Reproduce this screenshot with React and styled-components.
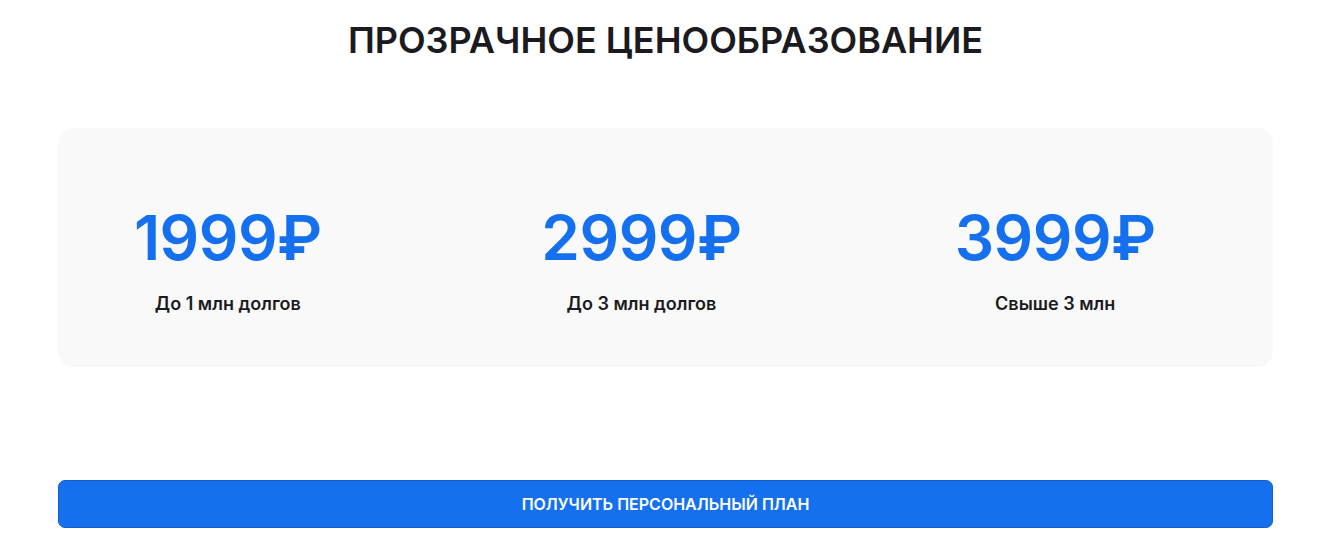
import React from 'react';
import styled, { createGlobalStyle } from 'styled-components';

const GlobalStyle = createGlobalStyle`
  body {
    margin: 0;
    background: #ffffff;
    font-family: Inter, "Noto Sans", sans-serif;
  }
`;

const Section = styled.section`
  width: 1215px;
  margin-left: 58px;
  padding-top: 19px;
  display: flex;
  flex-direction: column;
`;

const Title = styled.h2`
  margin: 0;
  text-align: center;
  font-size: 36px;
  line-height: 42px;
  font-weight: 600;
  color: #1b1b1f;
`;

const Card = styled.div`
  margin-top: 67px;
  height: 239px;
  background: #f9f9f9;
  border-radius: 16px;
  display: grid;
  grid-template-columns: repeat(3, 1fr);
  column-gap: 80px;
  padding: 0 51px 0 3px;
  align-items: center;
  box-sizing: border-box;
`;

const Plan = styled.div`
  display: flex;
  flex-direction: column;
  align-items: center;
  padding-top: 26px;
`;

const Price = styled.div`
  font-size: 62px;
  line-height: 62px;
  font-weight: 600;
  color: #1570ef;
  letter-spacing: -0.5px;
`;

const Caption = styled.div`
  margin-top: 24px;
  font-size: 18px;
  line-height: 22px;
  font-weight: 600;
  color: #1b1b1f;
`;

const CtaButton = styled.button`
  margin-top: 113px;
  height: 48px;
  width: 100%;
  border: 1px solid #125fcc;
  border-radius: 7px;
  background: #1570ef;
  color: #ffffff;
  font-family: Inter, "Noto Sans", sans-serif;
  font-size: 16px;
  font-weight: 600;
  text-transform: uppercase;
  cursor: pointer;
`;

const plans = [
  { price: '1999₽', caption: 'До 1 млн долгов' },
  { price: '2999₽', caption: 'До 3 млн долгов' },
  { price: '3999₽', caption: 'Свыше 3 млн' },
];

const App = () => (
  <>
    <GlobalStyle />
    <Section>
      <Title>ПРОЗРАЧНОЕ ЦЕНООБРАЗОВАНИЕ</Title>
      <Card>
        {plans.map(p => (
          <Plan key={p.price}>
            <Price>{p.price}</Price>
            <Caption>{p.caption}</Caption>
          </Plan>
        ))}
      </Card>
      <CtaButton>Получить персональный план</CtaButton>
    </Section>
  </>
);

export default App;
